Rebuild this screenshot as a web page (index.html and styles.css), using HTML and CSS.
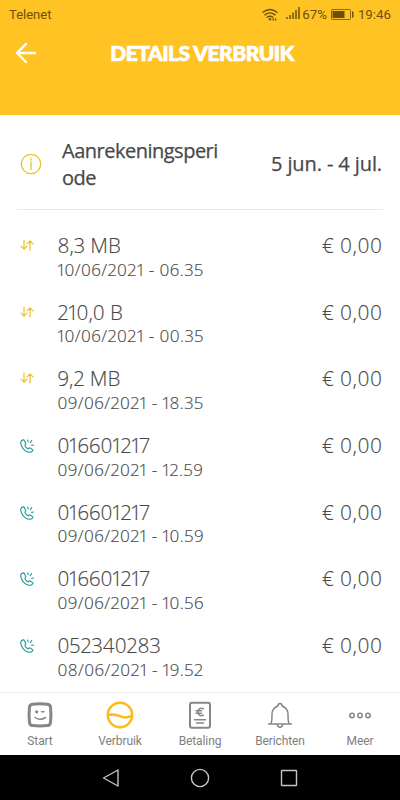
FILE: index.html
```
<!DOCTYPE html>
<html lang="nl">
<head>
<meta charset="utf-8">
<title>Details verbruik</title>
<link rel="stylesheet" href="styles.css">
</head>
<body>
<svg class="defs" width="0" height="0">
  <symbol id="data" viewBox="0 0 14 12">
    <path d="M4 1v9.2M1 7.2l3 3 3-3M10 11V1.8M7 4.8l3-3 3 3"/>
  </symbol>
  <symbol id="call" viewBox="0 0 14 14">
    <path d="M2 1.2C.6 2.200 .3 4.400 1.600 7c1.500 3.200 4.200 5.600 7 6.200 2 .3 3.400-.3 4.100-1.500.3-.5.1-1-.4-1.300L10.100 9c-.5-.3-1-.1-1.300.3l-.5.6C6.800 9.400 5.200 7.700 4.800 6.200l.6-.5c.4-.4.5-.8.3-1.200L4.300 1.600C4 .8 2.800.6 2 1.200zM7.700 1l.4 1.700M11.700 1.600l-1.500 2M13.400 6.100l-1.900.1"/>
  </symbol>
</svg>
<header class="top">
  <div class="status">
    <span class="carrier">Telenet</span>
    <svg class="wifi" width="16" height="13" viewBox="0 0 16 13"><path d="M1 4.200Q8-1.300 15 4.200M3 6.900q5-4 10 0M5.200 9.300q2.800-2.200 5.600 0"/><circle cx="8" cy="11.300" r="1.200"/><path d="M11.200 11v1M13.700 11v1"/></svg>
    <svg class="signal" width="14" height="12" viewBox="0 0 14 12"><path d="M1 10v2M4 8v4M7 5.500V12M10 3v9M13 0v12"/></svg>
    <span class="pct">67%</span>
    <svg class="battery" width="23" height="11" viewBox="0 0 23 11"><rect class="case" x=".5" y=".5" width="19" height="10" rx="1"/><rect x="1.500" y="2" width="12" height="7"/><rect x="21" y="2.500" width="1.500" height="6"/></svg>
    <span class="time">19:46</span>
  </div>
  <div class="titlebar">
    <svg class="back" width="22" height="22" viewBox="0 0 22 22"><path d="M20 11H2M11 2L2 11l9 9"/></svg>
    <h1>DETAILS VERBRUIK</h1>
  </div>
</header>
<main>
  <section class="period">
    <svg class="info" width="22" height="22" viewBox="0 0 22 22"><circle cx="11" cy="11" r="9.700"/><path d="M11 9v7.500M11 5.500v1.500"/></svg>
    <h2>Aanrekeningsperi<br>ode</h2>
    <span class="range">5 jun. - 4 jul.</span>
  </section>
  <ul class="usage">
    <li><svg class="ic data"><use href="#data"/></svg><div class="what"><b>8,3 MB</b><small>10/06/2021 - 06.35</small></div><span class="cost">€ 0,00</span></li>
    <li><svg class="ic data"><use href="#data"/></svg><div class="what"><b>210,0 B</b><small>10/06/2021 - 00.35</small></div><span class="cost">€ 0,00</span></li>
    <li><svg class="ic data"><use href="#data"/></svg><div class="what"><b>9,2 MB</b><small>09/06/2021 - 18.35</small></div><span class="cost">€ 0,00</span></li>
    <li><svg class="ic call"><use href="#call"/></svg><div class="what"><b>016601217</b><small>09/06/2021 - 12.59</small></div><span class="cost">€ 0,00</span></li>
    <li><svg class="ic call"><use href="#call"/></svg><div class="what"><b>016601217</b><small>09/06/2021 - 10.59</small></div><span class="cost">€ 0,00</span></li>
    <li><svg class="ic call"><use href="#call"/></svg><div class="what"><b>016601217</b><small>09/06/2021 - 10.56</small></div><span class="cost">€ 0,00</span></li>
    <li><svg class="ic call"><use href="#call"/></svg><div class="what"><b>052340283</b><small>08/06/2021 - 19.52</small></div><span class="cost">€ 0,00</span></li>
  </ul>
</main>
<nav class="tabs">
  <a><svg viewBox="0 0 28 28"><path class="thick" d="M6.500 3.200Q14 2.300 21.500 3.200q2.700.3 3 3Q25.400 14 24.500 21.500q-.3 2.700-3 3-7.500.9-15 0-2.700-.3-3-3Q2.600 14 3.500 6.200q.3-2.700 3-3z"/><circle class="dot" cx="10.700" cy="10.800" r="1.600"/><path d="M15.500 10.800h2.500M9 16.500q5 3.500 10.500 0"/></svg>Start</a>
  <a class="on"><svg viewBox="0 0 28 28"><circle cx="14" cy="14" r="12.200"/><path d="M1.800 14.500c4-1.800 8-1.200 12 .6s8 2 12-.6"/></svg>Verbruik</a>
  <a><svg viewBox="0 0 28 28"><rect class="bill" x="4" y="1.800" width="20" height="25" rx="2"/><path class="euro" d="M17.300 7.700q-5.300-1.500-5.300 3.300t5.300 3.300M10 9.800h5.500M10 12.200h5.500"/><path d="M8.500 18.700h11M10.500 22h7"/></svg>Betaling</a>
  <a><svg class="bell" viewBox="0 0 28 28"><path d="M2.500 23h23M4.500 23c1.800-1.500 1.300-5 1.500-10 .2-4.500 2.500-6.800 6-8 0-3.400 4-3.400 4 0 3.500 1.200 5.800 3.500 6 8 .2 5-.3 8.500 1.500 10M11.300 23.500q.3 2.700 2.700 2.700t2.700-2.700"/></svg>Berichten</a>
  <a><svg class="more" viewBox="0 0 28 28"><circle cx="6" cy="14.500" r="2.200"/><circle cx="14" cy="14.500" r="2.200"/><circle cx="22" cy="14.500" r="2.200"/></svg>Meer</a>
</nav>
<div class="system">
  <svg width="20" height="20" viewBox="0 0 20 20"><path d="M17 2v16L2.500 10z"/></svg>
  <svg width="20" height="20" viewBox="0 0 20 20"><circle cx="10" cy="10" r="8.600"/></svg>
  <svg width="20" height="20" viewBox="0 0 20 20"><rect x="2.500" y="2.500" width="15" height="15" rx=".5"/></svg>
</div>
</body>
</html>
```
FILE: styles.css
```
* { box-sizing: border-box; }
body { margin: 0; height: 800px; display: flex; flex-direction: column; overflow: hidden; background: #fff; color: #484848; font-family: "Open Sans", sans-serif; }
svg { flex: none; fill: none; stroke-linecap: round; stroke-linejoin: round; }
.defs { position: absolute; }
.top { height: 115px; background: #ffc424; flex: none; }
.status { display: flex; align-items: center; height: 28px; padding: 0 9px; font: 400 13px Roboto, sans-serif; color: #6c500d; }
.carrier { margin-right: auto; font-size: 13px; }
.wifi { stroke: #6c500d; stroke-width: 1.4; margin-right: 8px; }
.wifi circle { fill: #6c500d; stroke: none; }
.signal { stroke: #6c500d; stroke-width: 1.5; stroke-linecap: butt; margin: 0 2px 2px 0; }
.pct { margin-right: 4px; font-size: 13.3px; }
.battery { fill: #6c500d; margin-right: 4px; }
.battery .case { fill: none; stroke: #6c500d; stroke-width: .8; }
.time { font-size: 13.3px; }
.titlebar { display: grid; grid-template-columns: 40px 1fr 40px; align-items: center; height: 50px; }
.back { margin-left: 15px; stroke: #fff; stroke-width: 2.4; }
h1 { margin: 0 0 2px 4px; text-align: center; color: #fff; font: 900 21px Lato, sans-serif; letter-spacing: -.5px; -webkit-text-stroke: .7px #fff; }
main { flex: 1; overflow: hidden; }
.period { display: flex; align-items: center; height: 95px; margin: 0 17px; padding: 3px 1px 0 3px; border-bottom: 1px solid #e9e9e9; }
.info { stroke: #e6c62c; stroke-width: 1.3; }
h2, .range { margin: 0; font-size: 20px; line-height: 27px; font-weight: 500; letter-spacing: -.5px; -webkit-text-stroke: .25px #484848; }
h2 { margin-left: 20px; }
.range { margin-left: auto; white-space: nowrap; letter-spacing: -.1px; }
.usage { list-style: none; margin: 0; padding: 22px 18px 0 20px; font-weight: 300; font-feature-settings: "pnum"; -webkit-text-stroke: .15px #484848; }
.usage li { display: flex; height: 66.700px; }
.ic { margin-top: 7px; width: 14px; height: 12px; }
.data { stroke: #e8c227; stroke-width: 1.2; }
.call { width: 14px; height: 14px; stroke: #239696; stroke-width: 1.1; }
.what { display: flex; flex-direction: column; margin-left: 23.500px; }
.what b { font-weight: inherit; font-size: 20.500px; line-height: 26.500px; }
.what small { font-size: 17px; line-height: 22px; letter-spacing: .42px; }
.cost { margin-left: auto; margin-right: -.5px; font-size: 20.700px; line-height: 26.500px; letter-spacing: .5px; }
.tabs { display: grid; grid-template-columns: repeat(5, 1fr); height: 63px; flex: none; border-top: 1px solid #ececec; font: 400 12px/14px Roboto, sans-serif; letter-spacing: -.1px; color: #808080; }
.tabs a { display: flex; flex-direction: column; align-items: center; padding-top: 8px; gap: 5px; }
.tabs svg { width: 28px; height: 28px; stroke: #868686; stroke-width: 1.5; }
.tabs .thick { stroke-width: 3; }
.tabs .bill { stroke-width: 2; }
.tabs .euro { stroke-width: 1.5; }
.tabs .dot { fill: #868686; stroke: none; }
.tabs .on svg { stroke: #fbba16; stroke-width: 2.4; }
.system { display: flex; justify-content: center; align-items: center; gap: 69px; height: 45px; flex: none; background: #000; }
.system svg { stroke: #c4c4c4; stroke-width: 1.4; }
```
